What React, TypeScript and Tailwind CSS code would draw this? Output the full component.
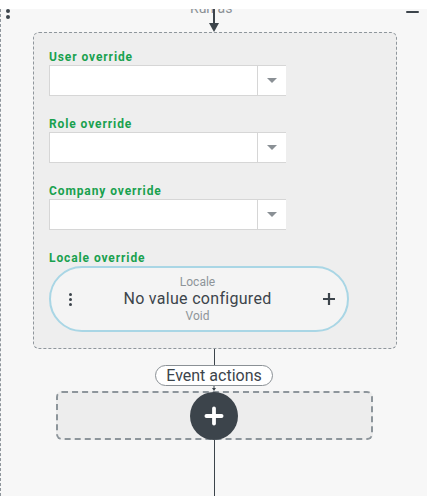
import { Plus } from 'lucide-react'

const fields = ['User override', 'Role override', 'Company override']

function Caret() {
  return (
    <svg width="10" height="5" viewBox="0 0 10 5">
      <path d="M0 0h10L5 5z" fill="#8a9095" />
    </svg>
  )
}

function SelectBox() {
  return (
    <div className="flex h-[31px] w-[237px] border border-r-0 border-[#d6d6d6] bg-white">
      <div className="flex-1" />
      <div className="flex w-[29px] items-center justify-center border-l border-[#d6d6d6]">
        <Caret />
      </div>
    </div>
  )
}

export default function App() {
  return (
    <div className="h-[496px] w-[427px] overflow-hidden bg-white pt-[9px] font-[Roboto]">
      <div className="relative flex h-[487px] flex-col items-center overflow-hidden border-l border-dashed border-[#8f969c] bg-[#f7f7f7]">
        {/* kebab + minimise on the outer card */}
        <div className="absolute left-[5px] top-[-6px] flex flex-col gap-[2px]">
          <span className="h-1 w-1 rounded-full bg-[#3c444b]" />
          <span className="h-1 w-1 rounded-full bg-[#3c444b]" />
          <span className="h-1 w-1 rounded-full bg-[#3c444b]" />
        </div>
        <div className="absolute left-[405px] top-[2px] h-[2px] w-[13px] rounded-full bg-[#3c444b]" />

        {/* run as connector */}
        <div className="relative h-[23px] w-full">
          <span className="absolute left-[189px] top-[-9px] text-sm leading-4 text-[#8a9095]">Run as</span>
          <svg className="absolute left-[207px] top-0" width="12" height="23" viewBox="0 0 12 23">
            <path d="M6 0v15" stroke="#3c444b" strokeWidth="2" />
            <path d="M1 14h10L6 23z" fill="#3c444b" />
          </svg>
        </div>

        <div className="ml-[32px] h-[317px] w-[364px] self-start rounded-md border border-dashed border-[#8f969c] bg-[#eeeeee] px-[15px] pt-[16px]">
          {fields.map((f, i) => (
            <div key={f} className={i > 0 ? 'mt-5' : ''}>
              <div className="text-xs font-bold leading-4 tracking-[0.9px] text-[#19a14e]">{f}</div>
              <SelectBox />
            </div>
          ))}
          <div className="mt-5 text-xs font-bold leading-4 tracking-[0.9px] text-[#19a14e]">Locale override</div>
          <div className="flex h-[66px] w-[300px] items-center rounded-full border-2 border-[#a9d6e5] bg-[#f4f4f4] pl-[18px] pr-[12px]">
            <div className="flex flex-col gap-[2px]">
              <span className="h-[3px] w-[3px] rounded-full bg-[#3c444b]" />
              <span className="h-[3px] w-[3px] rounded-full bg-[#3c444b]" />
              <span className="h-[3px] w-[3px] rounded-full bg-[#3c444b]" />
            </div>
            <div className="flex flex-1 flex-col items-center">
              <span className="text-xs leading-4 text-[#8e9499]">Locale</span>
              <span className="text-base leading-[18px] tracking-[0.3px] text-[#3c444b]">No value configured</span>
              <span className="text-xs leading-4 text-[#8e9499]">Void</span>
            </div>
            <svg width="12" height="12" viewBox="0 0 12 12">
              <path d="M6 0v12M0 6h12" stroke="#3c444b" strokeWidth="2.2" />
            </svg>
          </div>
        </div>

        <div className="h-[16px] w-px bg-[#3c444b]" />
        <div className="h-[21px] rounded-full border border-[#8a9095] bg-white px-[10px] text-base leading-[19px] text-[#3c444b]">
          Event actions
        </div>
        <svg width="6" height="5" viewBox="0 0 6 5">
          <path d="M3 0v2" stroke="#3c444b" strokeWidth="1" />
          <path d="M1 2h4L3 5z" fill="#3c444b" />
        </svg>
        <div className="flex h-[49px] w-[317px] items-center justify-center rounded-md border-2 border-dashed border-[#8d959b] bg-[#ededed]">
          <div className="flex h-[48px] w-[48px] shrink-0 items-center justify-center rounded-full bg-[#3c444b]">
            <Plus size={26} strokeWidth={3.5} color="#ffffff" />
          </div>
        </div>
        <div className="h-[56px] w-px bg-[#3c444b]" />
      </div>
    </div>
  )
}
